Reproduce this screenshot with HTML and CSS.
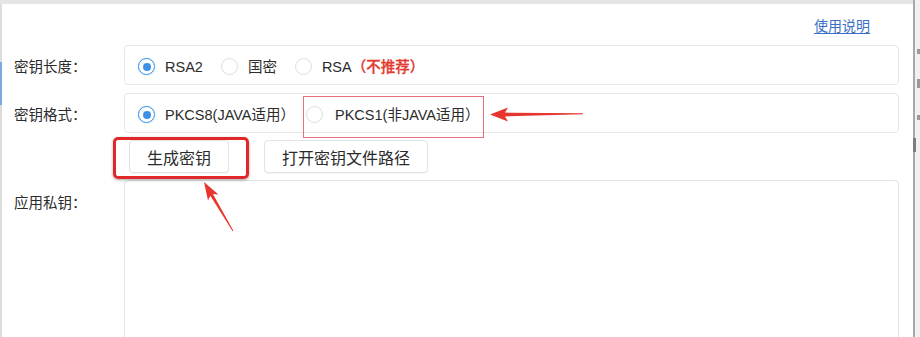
FILE: index.html
```html
<!DOCTYPE html>
<html lang="zh-CN">
<head>
<meta charset="utf-8">
<title>密钥生成</title>
<link rel="stylesheet" href="styles.css">
</head>
<body>
<div class="window">
  <div class="topbar"></div>
  <div class="main">
    <div class="left-edge"><span class="edge-marker"></span></div>
    <div class="content">
      <div class="help-row"><a class="help-link" href="#">使用说明</a></div>

      <div class="form-row">
        <div class="label">密钥长度：</div>
        <div class="radio-box">
          <span class="radio-item"><span class="radio checked"></span><span class="radio-text">RSA2</span></span>
          <span class="radio-item"><span class="radio"></span><span class="radio-text">国密</span></span>
          <span class="radio-item"><span class="radio"></span><span class="radio-text">RSA<span class="warn">（不推荐）</span></span></span>
        </div>
      </div>

      <div class="form-row">
        <div class="label">密钥格式：</div>
        <div class="radio-box">
          <span class="radio-item"><span class="radio checked"></span><span class="radio-text">PKCS8(JAVA适用）</span></span>
          <span class="radio-item marked"><span class="radio"></span><span class="radio-text">PKCS1(非JAVA适用）</span></span>
        </div>
      </div>

      <div class="btn-row">
        <button class="btn highlighted">生成密钥</button>
        <button class="btn">打开密钥文件路径</button>
      </div>

      <div class="form-row top">
        <div class="label">应用私钥：</div>
        <div class="textarea"></div>
      </div>
    </div>
    <div class="scroll-edge">
      <span class="edge-bit b1"></span>
      <span class="edge-bit b2"></span>
      <span class="edge-bit b3"></span>
      <span class="thumb"></span>
    </div>
  </div>

  <svg class="arrows" width="920" height="337" viewBox="0 0 920 337">
    <polygon fill="#e8352e" points="490,114.5 508,107.5 505,112.6 583,113.3 583,114.3 505,116.4 508,121.5"/>
    <polygon fill="#e8352e" points="204,182 218.4,194.4 212.9,194.1 233.4,230.8 232.6,231.2 210.3,195.7 208,200.6"/>
  </svg>
</div>
</body>
</html>
```

FILE: styles.css
```css
* { box-sizing: border-box; }

html, body {
  margin: 0;
  padding: 0;
  width: 920px;
  height: 337px;
  overflow: hidden;
  background: #ffffff;
}

body {
  font-family: "Liberation Sans", "Noto Sans CJK SC", sans-serif;
  font-size: 14px;
  color: #2b2b2b;
}

.window {
  position: relative;
  width: 920px;
  height: 337px;
  display: flex;
  flex-direction: column;
  overflow: hidden;
}

.topbar {
  height: 4px;
  background: #e5e5e5;
  margin-right: 6px;
  flex: none;
}

.main {
  flex: 1;
  display: flex;
  min-height: 0;
}

.left-edge {
  width: 2px;
  flex: none;
  background: #dcdcdc;
  padding-top: 58px;
}

.edge-marker {
  display: block;
  width: 2px;
  height: 43px;
  background: #7aa8e0;
}

.content {
  flex: 1;
  padding: 0 14px 0 12px;
  display: flex;
  flex-direction: column;
}

.content > * {
  flex: none;
}

.help-row {
  display: flex;
  justify-content: flex-end;
  padding: 12px 29px 0 0;
  height: 41px;
}

.help-link {
  font-size: 14px;
  line-height: 20px;
  color: #3b6fc6;
  text-decoration: underline;
  text-underline-offset: 2px;
}

.form-row {
  display: flex;
  align-items: center;
  margin-bottom: 8px;
}

.form-row.top {
  align-items: flex-start;
  margin-top: 7px;
  margin-bottom: 0;
}

.label {
  width: 110px;
  flex: none;
  font-size: 14.5px;
  line-height: 20px;
  padding-top: 3px;
  color: #2b2b2b;
}

.form-row.top .label {
  padding-top: 13px;
}

.radio-box {
  flex: 1;
  height: 40px;
  border: 1px solid #e8e8e8;
  border-radius: 4px;
  display: flex;
  align-items: center;
  padding: 3px 0 0 13px;
}

.radio-item {
  display: inline-flex;
  align-items: center;
  margin-right: 18px;
  height: 20px;
}

.radio {
  width: 17px;
  height: 17px;
  border-radius: 50%;
  border: 1px solid #dedede;
  background: #fff;
  position: relative;
  flex: none;
}

.radio.checked {
  border-color: #3d8fe8;
  box-shadow: 0 0 2px rgba(61, 143, 232, 0.35);
}

.radio.checked::after {
  content: "";
  position: absolute;
  left: 3.5px;
  top: 3.5px;
  width: 8px;
  height: 8px;
  border-radius: 50%;
  background: #3d8fe8;
}

.radio-text {
  margin-left: 10px;
  font-size: 14.5px;
  line-height: 20px;
  color: #2b2b2b;
  white-space: nowrap;
}

.warn {
  color: #e23b30;
  font-weight: 500;
  -webkit-text-stroke: 0.3px #e23b30;
}

.radio-item.marked {
  position: relative;
  margin-left: -7px;
}

.radio-item.marked .radio-text {
  margin-left: 12px;
}

.radio-item.marked::after {
  content: "";
  position: absolute;
  left: -3px;
  right: -4px;
  top: -9px;
  bottom: -13px;
  border: 1px solid #e8707a;
  pointer-events: none;
}

.btn-row {
  display: flex;
  gap: 35px;
  padding-left: 115px;
  margin-top: -1px;
}

.btn {
  height: 33px;
  padding: 0 17px;
  border: 1px solid #e2e2e2;
  border-radius: 4px;
  background: #ffffff;
  font-family: "Liberation Sans", "Noto Sans CJK SC", sans-serif;
  font-size: 16px;
  color: #2b2b2b;
  box-shadow: 0 1px 1px rgba(0, 0, 0, 0.04);
}

.btn.highlighted {
  position: relative;
}

.btn.highlighted::after {
  content: "";
  position: absolute;
  left: -17px;
  right: -21px;
  top: -4px;
  bottom: -7px;
  border: 3px solid #e0282a;
  border-radius: 5px;
  box-shadow: 0 1px 3px rgba(0, 0, 0, 0.35);
  pointer-events: none;
}

.textarea {
  flex: 1;
  height: 170px;
  border: 1px solid #e2e2e2;
  border-radius: 4px;
  background: #fff;
}

.scroll-edge {
  width: 7px;
  flex: none;
  margin-top: -4px;
  border-left: 2px solid #a9a9a9;
  background: #f1f1f1;
  display: flex;
  flex-direction: column;
  align-items: flex-end;
}

.edge-bit {
  display: block;
  width: 3px;
  background: #9a9a9a;
}

.edge-bit.b1 { height: 5px; margin-top: 49px; }
.edge-bit.b2 { height: 9px; margin-top: 25px; }
.edge-bit.b3 { height: 5px; margin-top: 27px; }

.thumb {
  display: block;
  align-self: stretch;
  height: 14px;
  margin-top: 18px;
  margin-left: -2px;
  background: #7d7d7d;
  width: 3px;
}

.arrows {
  position: absolute;
  left: 0;
  top: 0;
  pointer-events: none;
}
```
